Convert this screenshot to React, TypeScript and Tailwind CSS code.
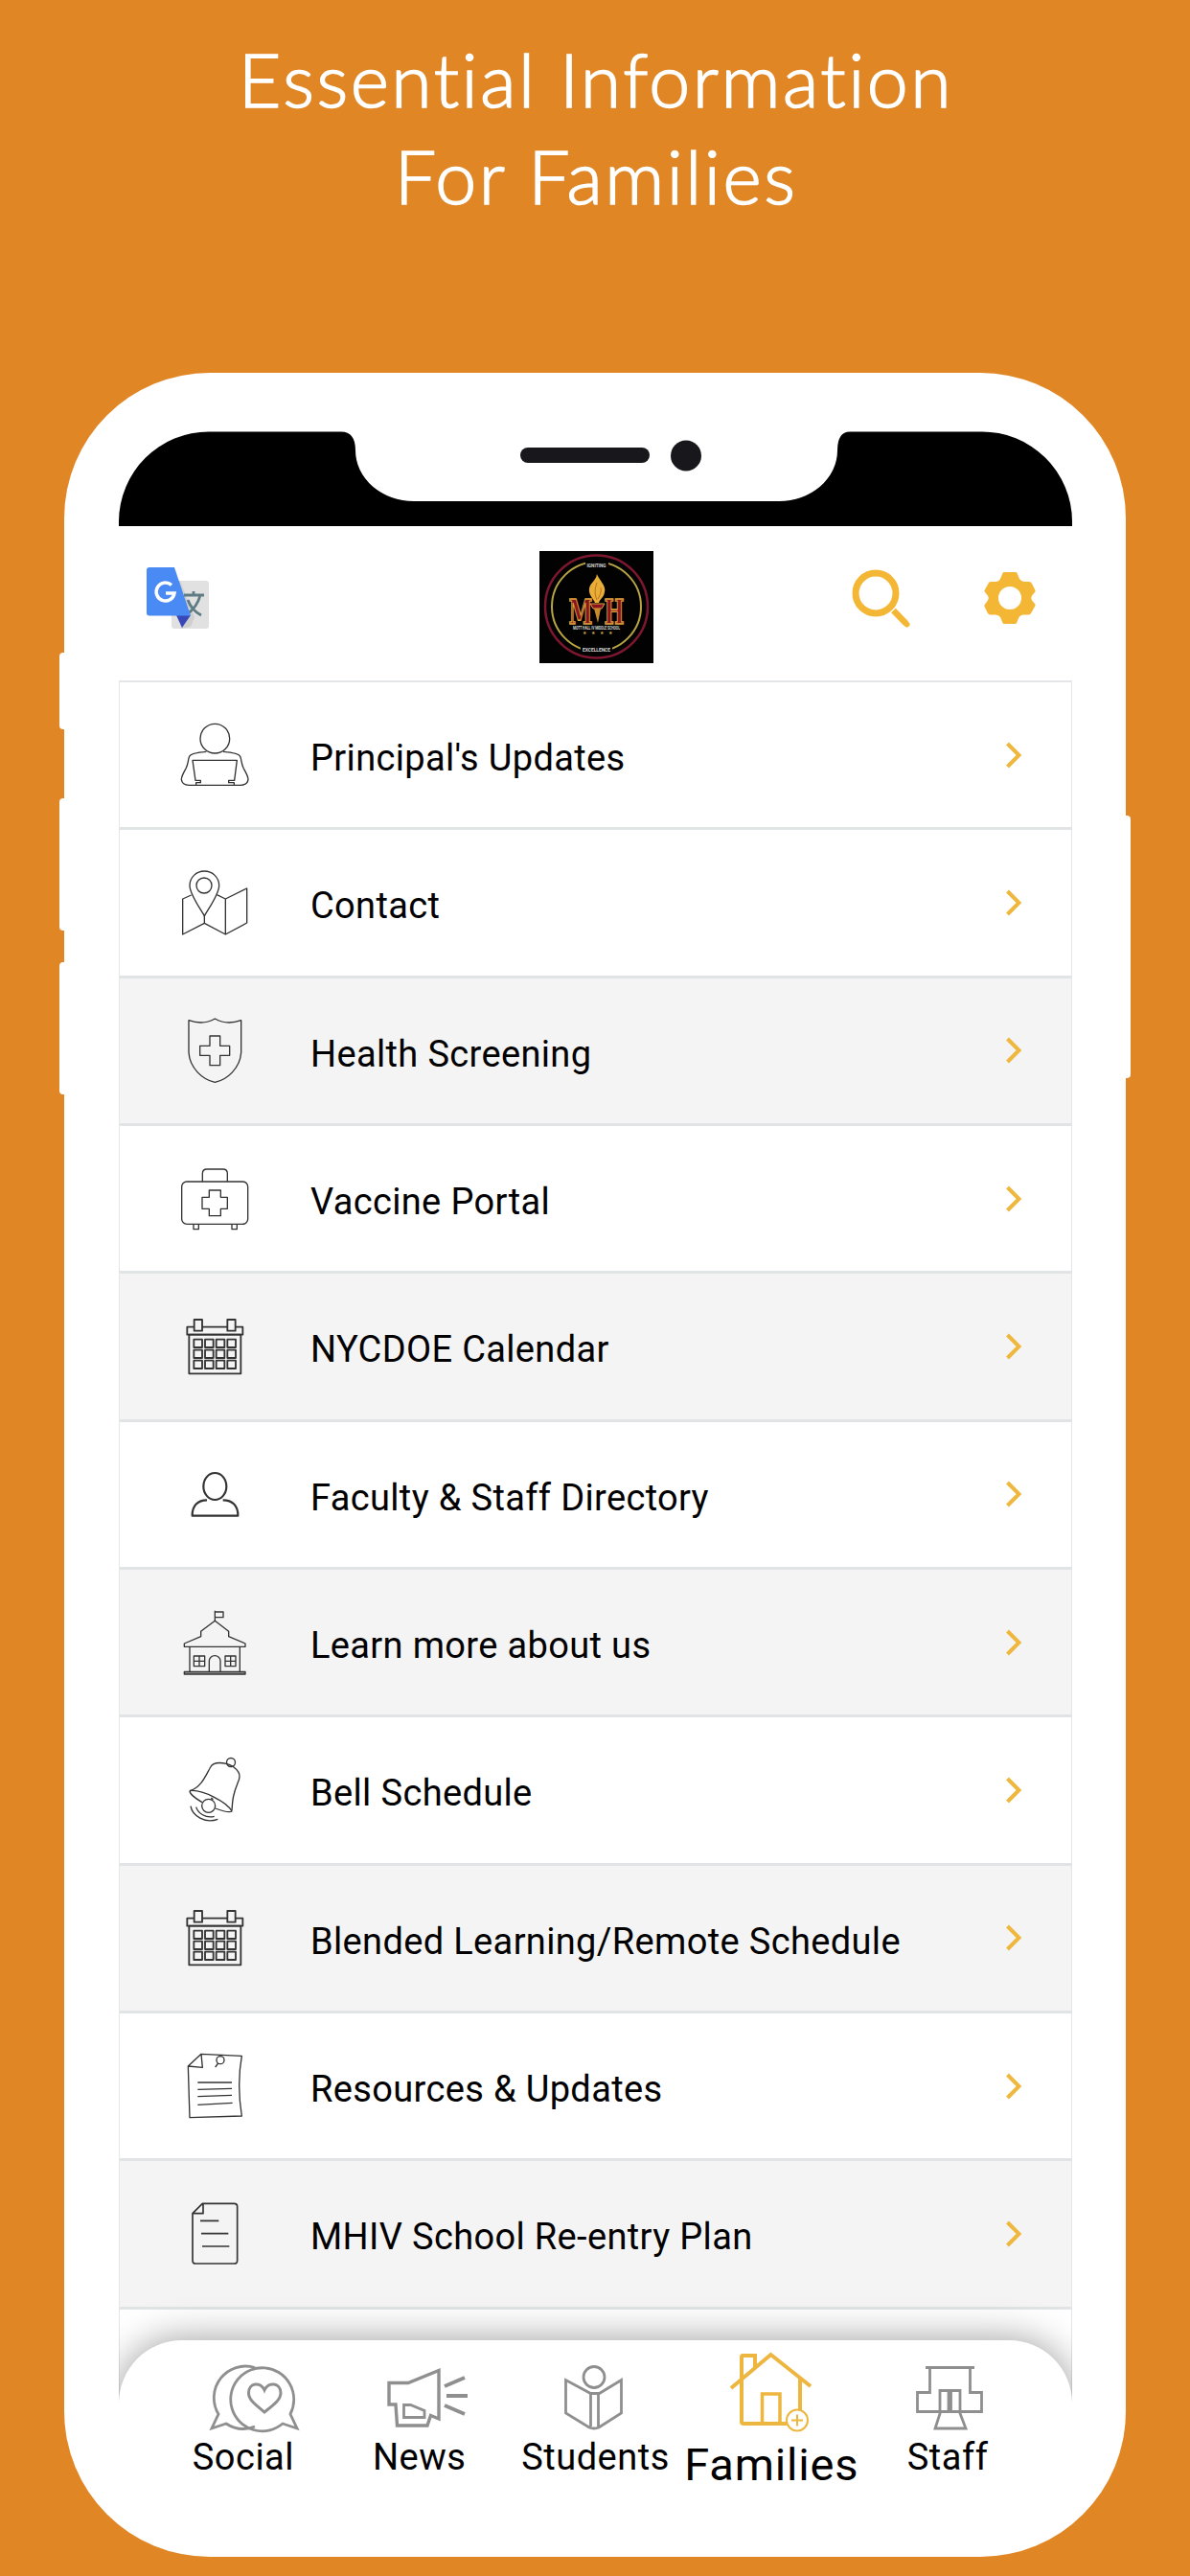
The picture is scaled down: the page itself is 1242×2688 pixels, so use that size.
import React from 'react';

type Row = { label: string; icon: React.ReactNode; shaded?: boolean };

function LineIcon({ children, width = 4 }: { children: React.ReactNode; width?: number }) {
    return (
        <svg viewBox="0 0 240 240" className="h-20 w-20 shrink-0" fill="none" stroke="#333333" strokeWidth={width} strokeLinejoin="round">
            {children}
        </svg>
    );
}

function PrincipalIcon() {
    return (
        <LineIcon>
            <circle cx="121" cy="68" r="46" />
            <path d="M94 109C70 111 45 114 41 124C36 136 38 146 30 162C22 176 16 186 16 196Q18 213 40 214H201Q223 213 225 196C225 186 219 176 211 162C203 146 205 136 200 124C196 114 171 111 147 109" />
            <path d="M62 213V206H76V199H60L51 136H190L182 199H164V206H181V213" />
        </LineIcon>
    );
}

function MapIcon() {
    return (
        <LineIcon>
            <path d="M88 162C80 145 42 95 42 66A46 45 0 0 1 134 66C134 95 96 145 88 162Z" />
            <circle cx="87" cy="66" r="24" />
            <path d="M47 96L20 108V219L88 184L154 219L221 183V75L154 108L127 95M88 162V184M154 108V219" />
        </LineIcon>
    );
}

function ShieldIcon() {
    return (
        <LineIcon>
            <path d="M39 26Q85 42 121 21Q157 42 203 26V127C200 175 160 212 121 220C82 212 42 175 39 127Z" />
            <path d="M105 75H137V106H167V136H137V167H105V136H74V106H105Z" />
        </LineIcon>
    );
}

function KitIcon() {
    return (
        <LineIcon>
            <rect x="17" y="66" width="207" height="133" rx="16" />
            <path d="M82 66V41Q82 27 96 27H146Q160 27 160 41V66" />
            <path d="M103 93H139V115H160V151H139V173H103V151H81V115H103Z" />
            <path d="M54 199V215H70V199M174 199V215H190V199" />
        </LineIcon>
    );
}

function CalendarIcon() {
    return (
        <LineIcon width={5.5}>
            <rect x="40" y="83" width="162" height="122" />
            <rect x="34" y="59" width="174" height="24" />
            <rect x="56" y="36" width="25" height="35" fill="#f4f4f4" />
            <rect x="160" y="36" width="25" height="35" fill="#f4f4f4" />
            {[98, 131, 164].map((y) =>
                [55, 90, 125, 160].map((x) => <rect key={`${x}-${y}`} x={x} y={y} width="26" height="25" />)
            )}
        </LineIcon>
    );
}

function PersonIcon() {
    return (
        <LineIcon width={6.5}>
            <ellipse cx="121" cy="96" rx="36" ry="42" />
            <path d="M96 139C68 139 49 156 50 188H193C194 156 175 139 146 139" />
        </LineIcon>
    );
}

function SchoolIcon() {
    return (
        <LineIcon>
            <path d="M121 20V52M121 24H147V41H121" />
            <path d="M121 52L164 85V101L216 123V133H25V123L77 101V85Z" />
            <path d="M42 133V210M199 133V210" />
            <rect x="25" y="211" width="191" height="8" fill="#888888" />
            <path d="M55 162H89V194H55ZM72 162V194M55 178H89M153 162H186V194H153ZM170 162V194M153 178H186" />
            <path d="M103 210V177A17.500 16 0 0 1 138 177V210" />
        </LineIcon>
    );
}

function BellIcon() {
    return (
        <LineIcon>
            <circle cx="171" cy="33" r="13.500" />
            <path d="M42 122C78 112 92 74 107 48C114 34 128 31 157 37C172 40 188 53 195 64C202 76 198 86 192 98C178 132 176 150 174 184" />
            <path d="M42 122C80 116 160 158 174 186C168 190 146 186 122 177M42 122C42 134 62 146 81 158" />
            <path d="M109 144L114 148L111 151" />
            <circle cx="101" cy="169" r="21" />
            <path d="M45 170C50 200 90 226 130 211M62 173C68 192 92 209 119 202" />
        </LineIcon>
    );
}

function NoteIcon() {
    return (
        <LineIcon>
            <path d="M78 19L205 25C195 80 195 150 205 213L42 218L37 57ZM37 57L82 61L78 19" />
            <circle cx="138" cy="38" r="12" />
            <path d="M131 48L122 60M67 108H174M67 130L174 127M67 152L174 148M67 178L176 172" />
        </LineIcon>
    );
}

function DocIcon() {
    return (
        <LineIcon width={5}>
            <path d="M82 25H181Q191 25 191 35V203Q191 213 181 213H61Q51 213 51 203V56ZM84 25V56H51M75 79H133M78 119H163M81 159H166" />
        </LineIcon>
    );
}

const rows: Row[] = [
    { label: "Principal's Updates", icon: <PrincipalIcon /> },
    { label: 'Contact', icon: <MapIcon /> },
    { label: 'Health Screening', icon: <ShieldIcon />, shaded: true },
    { label: 'Vaccine Portal', icon: <KitIcon /> },
    { label: 'NYCDOE Calendar', icon: <CalendarIcon />, shaded: true },
    { label: 'Faculty & Staff Directory', icon: <PersonIcon /> },
    { label: 'Learn more about us', icon: <SchoolIcon />, shaded: true },
    { label: 'Bell Schedule', icon: <BellIcon /> },
    { label: 'Blended Learning/Remote Schedule', icon: <CalendarIcon />, shaded: true },
    { label: 'Resources & Updates', icon: <NoteIcon /> },
    { label: 'MHIV School Re-entry Plan', icon: <DocIcon />, shaded: true },
];

function TabIcon({ children, active }: { children: React.ReactNode; active?: boolean }) {
    return (
        <svg viewBox="0 0 120 90" className="h-[90px] w-[120px]" fill="none" stroke={active ? '#edb63f' : '#8f8f8f'} strokeWidth={active ? 4 : 2.8}>
            {children}
        </svg>
    );
}

const tabs = [
    {
        label: 'Social',
        icon: (
            <TabIcon>
                <path d="M109 68A33 33 0 1 0 101 78L116 83Z" />
                <path d="M72 19.500A33 33 0 0 0 34 68L27 83L42 78A33 33 0 0 0 72 81" />
                <path d="M82 66C72 58 65.500 53 65.500 46C65.500 35 78 34 82 43C86 34 99 35 99 46C99 53 92 58 82 66Z" strokeWidth="3" />
            </TabIcon>
        ),
    },
    {
        label: 'News',
        icon: (
            <TabIcon>
                <path d="M28 35.500H48L80 22.500V73L71.500 69.500L68 80H36.500L35 58H28Z" strokeWidth="3.400" />
                <path d="M43.500 58.500H50.500L65 64.500V71.500H43.500Z" />
                <path d="M86 39L107 30M88 49H110M86 59L107 68" strokeWidth="4" />
            </TabIcon>
        ),
    },
    {
        label: 'Students',
        icon: (
            <TabIcon>
                <circle cx="59" cy="29.500" r="11" />
                <path d="M29.500 32.500V67L54 82Q59 84 64 82L87.500 67V32.500L64.500 46.500H55.500Z" />
                <path d="M55.500 46.500V81M63.500 46.500V81" />
            </TabIcon>
        ),
    },
    {
        label: 'Families',
        active: true,
        icon: (
            <TabIcon active>
                <path d="M18 41L59.500 6L101 39" />
                <path d="M43 20V7H30Q29 7 29 9V76Q29 78 31 78H76M90 31V64" />
                <path d="M50.500 78V47H69V78" strokeWidth="3.500" />
                <circle cx="87" cy="74.500" r="11" strokeWidth="2" />
                <path d="M87 68.500V80.500M81 74.500H93" strokeWidth="2" />
            </TabIcon>
        ),
    },
    {
        label: 'Staff',
        icon: (
            <TabIcon>
                <path d="M37 19.500H88M41.500 19.500V45.500H28.500V65.500H95.500V45.500H83.500V19.500" />
                <path d="M52 65.500V43.500H73V65.500M61 44V65M63.500 44V65" />
                <path d="M52.500 66L47 83H79L72.500 66" />
            </TabIcon>
        ),
    },
];

function TranslateIcon() {
    return (
        <svg viewBox="0 0 68 66" className="h-[66px] w-[68px]">
            <rect x="26" y="14" width="39" height="50" rx="3" fill="#e1e1e1" />
            <path d="M35 14L50 52L46 62L36 64L29 14Z" fill="#cfcfcf" />
            <path d="M39 29H60M49 25V29M56 29C54 38 48 45 41 50M43 34C46 42 51 47 57 50" fill="none" stroke="#5f7c85" strokeWidth="2.800" />
            <path d="M31 50H46L37 63Z" fill="#3848b8" />
            <path d="M3 0H29L46 50.500H3Q0 50.500 0 47.500V3Q0 0 3 0Z" fill="#4a8af4" />
            <path d="M26 18.500A9.500 9.500 0 1 0 29 27H20" fill="none" stroke="#ffffff" strokeWidth="3.500" />
        </svg>
    );
}

function SchoolLogo() {
    return (
        <svg viewBox="0 0 119 117" className="h-[117px] w-[119px]">
            <rect width="119" height="117" fill="#020202" />
            <circle cx="59.500" cy="58" r="53.500" fill="none" stroke="#7d1730" strokeWidth="2.500" />
            <circle cx="59.500" cy="58" r="46.500" fill="none" stroke="#b9a444" strokeWidth="2" />
            <rect x="48" y="8" width="24" height="9" fill="#020202" />
            <rect x="43" y="97" width="33" height="11" fill="#020202" />
            <text x="59.500" y="16.500" fontSize="5.500" textAnchor="middle" fill="#d8d8d8" fontWeight="700" textLength="20" lengthAdjust="spacingAndGlyphs">IGNITING</text>
            <text x="59.500" y="105" fontSize="5.500" textAnchor="middle" fill="#d8d8d8" fontWeight="700" textLength="29" lengthAdjust="spacingAndGlyphs">EXCELLENCE</text>
            <g fontFamily="DejaVu Serif, serif" fontWeight="700" fill="#8a1420" stroke="#dda23c" strokeWidth="1.400">
                <text x="30.500" y="75.500" fontSize="36" textLength="25" lengthAdjust="spacingAndGlyphs">M</text>
                <text x="67.500" y="75.500" fontSize="36" textLength="21" lengthAdjust="spacingAndGlyphs">H</text>
            </g>
            <path d="M60 24C62 30 70 36 68 43C67 49 63 50 62 54H58C56 49 51 46 52 39C53 33 59 31 60 24Z" fill="#e9ae37" />
            <path d="M60 33C58 39 57 44 60 51M64 38C65 43 63 46 61 50" fill="none" stroke="#b6701e" strokeWidth="1" />
            <path d="M53 55H68L65 60H56Z" fill="#8a1420" stroke="#dda23c" />
            <path d="M57 60H64L61 75Z" fill="#c98a2c" />
            <text x="59.500" y="81.500" fontSize="4.800" textAnchor="middle" fill="#dcdcdc" fontWeight="700" textLength="49" lengthAdjust="spacingAndGlyphs">MOTT HALL IV MIDDLE SCHOOL</text>
            <text x="60" y="87" fontSize="5" textAnchor="middle" fill="#c9a24a" textLength="31">★★★★</text>
        </svg>
    );
}

function SearchIcon() {
    return (
        <svg viewBox="0 0 64 64" className="h-16 w-16" fill="none" stroke="#f3b735" strokeWidth="7">
            <circle cx="25" cy="26" r="21" />
            <path d="M43.500 44L56.500 57.500" strokeWidth="6.500" />
            <path d="M56 57L57.500 58.500" strokeWidth="6" strokeLinecap="round" />
        </svg>
    );
}

function GearIcon() {
    return (
        <svg viewBox="0 0 54 54" className="h-[54px] w-[54px]">
            <path
                fill="#f3b735"
                fillRule="evenodd"
                d="M21 0H33Q34 0 34.500 1L37 7Q39 10 42 10H47Q49 10 50 12L53.500 19Q54 20 53 21L50 24.500Q48.500 27 50 29.500L53 33Q54 34 53.500 35L49 43Q48 44.500 46 44.500H41Q38 44.500 36.500 47L34 53Q33.500 54 33 54H21Q20 54 19.500 53L17 47Q15.500 44.500 12 44.500H7Q5 44.500 4 43L.5 36Q0 34.500 1 33.500L4 29.500Q5.500 27 4 24.500L1 21Q0 20 .5 19L5 11Q6 10 7 10H12Q15.500 10 17 7L19.500 1Q20 0 21 0ZM27 15A12 12 0 1 0 27 39A12 12 0 1 0 27 15Z"
            />
        </svg>
    );
}

export default function App() {
    return (
        <div className="flex h-[2688px] w-[1242px] flex-col overflow-hidden bg-[#e08624] font-['Roboto',sans-serif] text-black">
            <h1 className="h-[389px] pt-[32px] pl-[2px] text-center font-['Lato',sans-serif] text-[77px] leading-[101px] font-light tracking-[2.5px] text-white [-webkit-text-stroke:1.6px_white]">
                Essential Information
                <br />
                For Families
            </h1>

            {/* PHONE */}
            <div className="relative ml-[67px] h-[2279px] w-[1108px] rounded-[152px] bg-white px-[57px] pt-[61px]">
                <div className="absolute top-[292px] -left-[5px] h-[80px] w-[10px] rounded-l bg-white" />
                <div className="absolute top-[444px] -left-[5px] h-[138px] w-[10px] rounded-l bg-white" />
                <div className="absolute top-[615px] -left-[5px] h-[138px] w-[10px] rounded-l bg-white" />
                <div className="absolute top-[462px] -right-[5px] h-[274px] w-[10px] rounded-r-sm bg-white" />

                <svg viewBox="0 0 995 99" className="block h-[99px] w-[995px]">
                    <path d="M0 99V94A94 94 0 0 1 94 .5H232Q247 .5 247 20A61 53 0 0 0 308 73H689A61 53 0 0 0 750 20Q750 .5 763 .5H900A94 94 0 0 1 995 94V99Z" />
                    <rect x="419" y="17" width="135" height="16" rx="8" fill="#18171c" />
                    <circle cx="592" cy="25.500" r="16" fill="#18171c" />
                </svg>

                {/* HEADER */}
                <div className="grid h-[161px] w-[995px] grid-cols-3">
                    <div className="pt-[43px] pl-[29px]">
                        <TranslateIcon />
                    </div>
                    <div className="flex justify-center pt-[26px] pl-[3px]">
                        <SchoolLogo />
                    </div>
                    <div className="flex justify-end gap-[74px] pt-[44px] pr-[38px]">
                        <SearchIcon />
                        <div className="pt-1">
                            <GearIcon />
                        </div>
                    </div>
                </div>

                {/* MENU + TABS */}
                <div className="w-[995px] overflow-hidden">
                    <div className="h-[1795px] border-x border-t-2 border-[#e4e6e7]">
                        {rows.map((row) => (
                            <div
                                key={row.label}
                                className={`flex h-[154.330px] items-center border-b-[3px] border-[#e1e4e5] pr-[51px] pl-[59px] ${row.shaded ? 'bg-[#f4f4f4]' : 'bg-white'}`}
                            >
                                {row.icon}
                                <span className="ml-[60px] flex-1 pt-[7px] text-[38px] leading-[44px] tracking-[0.35px]">{row.label}</span>
                                <svg viewBox="0 0 18 28" className="h-7 w-[18px]" fill="none" stroke="#efb73e" strokeWidth="4">
                                    <path d="M2.500 2L14.500 14L2.500 26" />
                                </svg>
                            </div>
                        ))}
                    </div>

                    <nav className="relative -mt-[63px] flex h-[158px] rounded-t-[66px] bg-white px-[38px] pt-[9px] shadow-[0_0_40px_rgba(0,0,0,0.4)]">
                        {tabs.map((tab) => (
                            <div key={tab.label} className="flex w-[183.800px] flex-col items-center">
                                {tab.icon}
                                <span
                                    className={
                                        tab.active
                                            ? 'mt-[3px] text-[47px] leading-[55px] tracking-[0.8px] whitespace-nowrap'
                                            : 'mt-px text-[38px] leading-[44px] tracking-[0.5px] whitespace-nowrap'
                                    }
                                >
                                    {tab.label}
                                </span>
                            </div>
                        ))}
                    </nav>
                </div>
            </div>
        </div>
    );
}
